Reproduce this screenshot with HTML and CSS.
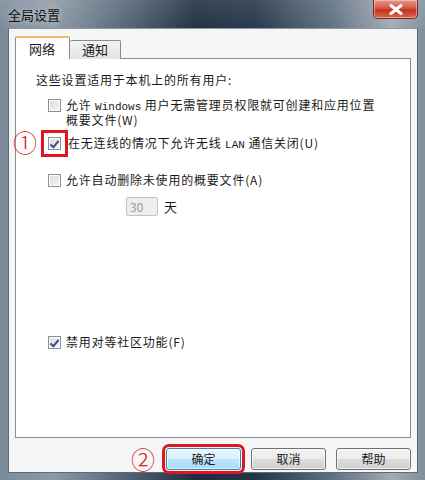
FILE: index.html
```html
<!DOCTYPE html>
<html lang="zh-CN">
<head>
	<meta charset="UTF-8">
	<title>全局设置</title>
	<link rel="stylesheet" href="styles.css">
</head>
<body>
	<div class="window">
		<div class="titlebar">
			<span class="title">全局设置</span>
			<span class="close">
				<svg width="14" height="11" viewBox="0 0 14 11"><path d="M2 1.5 L12 9.5 M12 1.5 L2 9.5" stroke="#fff" stroke-width="3" stroke-linecap="round"/></svg>
			</span>
		</div>
		<div class="client">
			<div class="tabs">
				<div class="tab active">网络</div>
				<div class="tab">通知</div>
			</div>
			<div class="panel">
				<span class="num num-1">①</span>
				<p class="intro">这些设置适用于本机上的所有用户:</p>
				<div class="row row-1">
					<span class="box"></span>
					<span class="text">允许 <span class="en">Windows</span> 用户无需管理员权限就可创建和应用位置<br>概要文件(W)</span>
				</div>
				<div class="row row-2">
					<span class="box checked marked"></span>
					<span class="text">在无连线的情况下允许无线 <span class="en">LAN</span> 通信关闭(U)</span>
				</div>
				<div class="row row-3">
					<span class="box"></span>
					<span class="text">允许自动删除未使用的概要文件(A)</span>
				</div>
				<div class="days">
					<span class="input">30</span>
					<span class="unit">天</span>
				</div>
				<div class="row row-4">
					<span class="box checked"></span>
					<span class="text">禁用对等社区功能(F)</span>
				</div>
			</div>
			<div class="buttons">
				<span class="num num-2">②</span>
				<span class="btn default">确定</span>
				<span class="btn">取消</span>
				<span class="btn">帮助</span>
			</div>
		</div>
	</div>
</body>
</html>
```

FILE: styles.css
```css
*{
	margin: 0;
	padding: 0;
	box-sizing: border-box;
}
body{
	width: 425px;
	height: 480px;
	overflow: hidden;
	font-family: "Noto Sans CJK SC", "Liberation Sans", sans-serif;
	font-size: 12px;
	color: #1a1a1a;
}
.window{
	width: 425px;
	height: 480px;
	display: flex;
	flex-direction: column;
	background: linear-gradient(to right, #7b8a97 0%, #8d9ba7 12%, #59697a 28%, #1e2d3f 46%, #243548 60%, #5d6f80 78%, #a5a9b2 92%, #7f8f9c 100%);
}
.titlebar{
	height: 28px;
	display: flex;
	justify-content: space-between;
	align-items: flex-start;
	padding: 0 7px 0 8px;
	background: linear-gradient(to bottom, rgba(255,255,255,0.12), rgba(255,255,255,0.03));
}
.title{
	margin-top: 5px;
	font-size: 13px;
	color: #111;
	text-shadow: 0 0 6px rgba(255,255,255,0.6);
}
.close{
	width: 45px;
	height: 19px;
	display: flex;
	align-items: center;
	justify-content: center;
	border: 1px solid #6a2a26;
	border-top: none;
	border-radius: 0 0 5px 5px;
	background: linear-gradient(to bottom, #e29a8c 0%, #d35a44 45%, #c2301c 55%, #d86a4e 100%);
	box-shadow: inset 0 0 0 1px rgba(255,220,210,0.5);
}
.client{
	flex: 1;
	display: flex;
	flex-direction: column;
	margin: 0 7px 7px 8px;
	padding: 7px 6px 0 6px;
	background: #f6f6f6;
	border: 1px solid #5c6a78;
	border-top-color: #8a96a2;
}
.tabs{
	display: flex;
	align-items: flex-end;
	height: 23px;
	position: relative;
	z-index: 1;
	margin-bottom: -1px;
}
.tab{
	height: 19px;
	padding: 0 12px;
	line-height: 18px;
	font-size: 13px;
	border: 1px solid #898c95;
	border-bottom: none;
	border-radius: 2px 2px 0 0;
	background: linear-gradient(to bottom, #f3f3f3, #e4e4e4);
}
.tab + .tab{
	border-left: none;
}
.tab.active{
	height: 23px;
	padding: 0 14px 0 13px;
	line-height: 22px;
	background: #fff;
	border-top: 2px solid #f2b96a;
}
.panel{
	height: 380px;
	position: relative;
	background: #fff;
	border: 1px solid #898c95;
	padding: 13px 0 0 20px;
	letter-spacing: 0.8px;
}
.intro{
	line-height: 16px;
}
.row{
	display: flex;
	align-items: flex-start;
	margin-left: 12px;
	line-height: 14px;
}
.row-1{
	margin-top: 10px;
}
.row-2{
	margin-top: 9px;
}
.row-3{
	margin-top: 22px;
}
.row-4{
	margin-top: 119px;
}
.row .text{
	margin-left: 5px;
}
.row-2 .text{
	margin-left: 7px;
}
.en{
	font-family: "Liberation Mono", monospace;
	font-size: 11px;
	line-height: 1;
	letter-spacing: 0;
}
.box{
	flex: none;
	width: 13px;
	height: 13px;
	margin-top: 1px;
	border: 1px solid #8e8f8f;
	background: linear-gradient(135deg, #dadada, #f6f6f6);
	box-shadow: inset 0 0 0 1px #fff;
	position: relative;
}
.box.checked::after{
	content: "";
	position: absolute;
	left: 3px;
	top: 1px;
	width: 3px;
	height: 7px;
	border: solid #3a4f9a;
	border-width: 0 2px 2px 0;
	transform: rotate(40deg);
}
.box.marked{
	outline: 3px solid #e0151f;
	outline-offset: 4px;
}
.num{
	position: absolute;
	color: #d1201c;
	font-size: 24px;
	font-weight: 300;
	line-height: 24px;
	letter-spacing: 0;
}
.num-1{
	left: -3px;
	top: 71px;
}
.days{
	display: flex;
	align-items: center;
	margin: 10px 0 0 90px;
}
.input{
	width: 32px;
	height: 19px;
	padding-left: 3px;
	line-height: 17px;
	color: #9a9a9a;
	background: #eeeeee;
	border: 1px solid #c3c3c3;
	border-radius: 2px;
	letter-spacing: 0;
}
.unit{
	margin-left: 6px;
	font-size: 13px;
}
.buttons{
	display: flex;
	justify-content: flex-end;
	align-items: center;
	gap: 10px;
	margin-top: 10px;
	position: relative;
}
.btn{
	width: 75px;
	height: 22px;
	line-height: 20px;
	text-align: center;
	border: 1px solid #707070;
	border-radius: 3px;
	background: linear-gradient(to bottom, #f2f2f2 0%, #ebebeb 50%, #dddddd 50%, #cfcfcf 100%);
	box-shadow: inset 0 0 0 1px rgba(255,255,255,0.7);
}
.btn.default{
	border-color: #3c7fb1;
	background: linear-gradient(to bottom, #eaf6fd 0%, #d9f0fc 50%, #bee6fd 50%, #a7d9f5 100%);
	outline: 3px solid #e0151f;
	outline-offset: 1px;
}
.num-2{
	right: 256px;
	top: -1px;
}
```
